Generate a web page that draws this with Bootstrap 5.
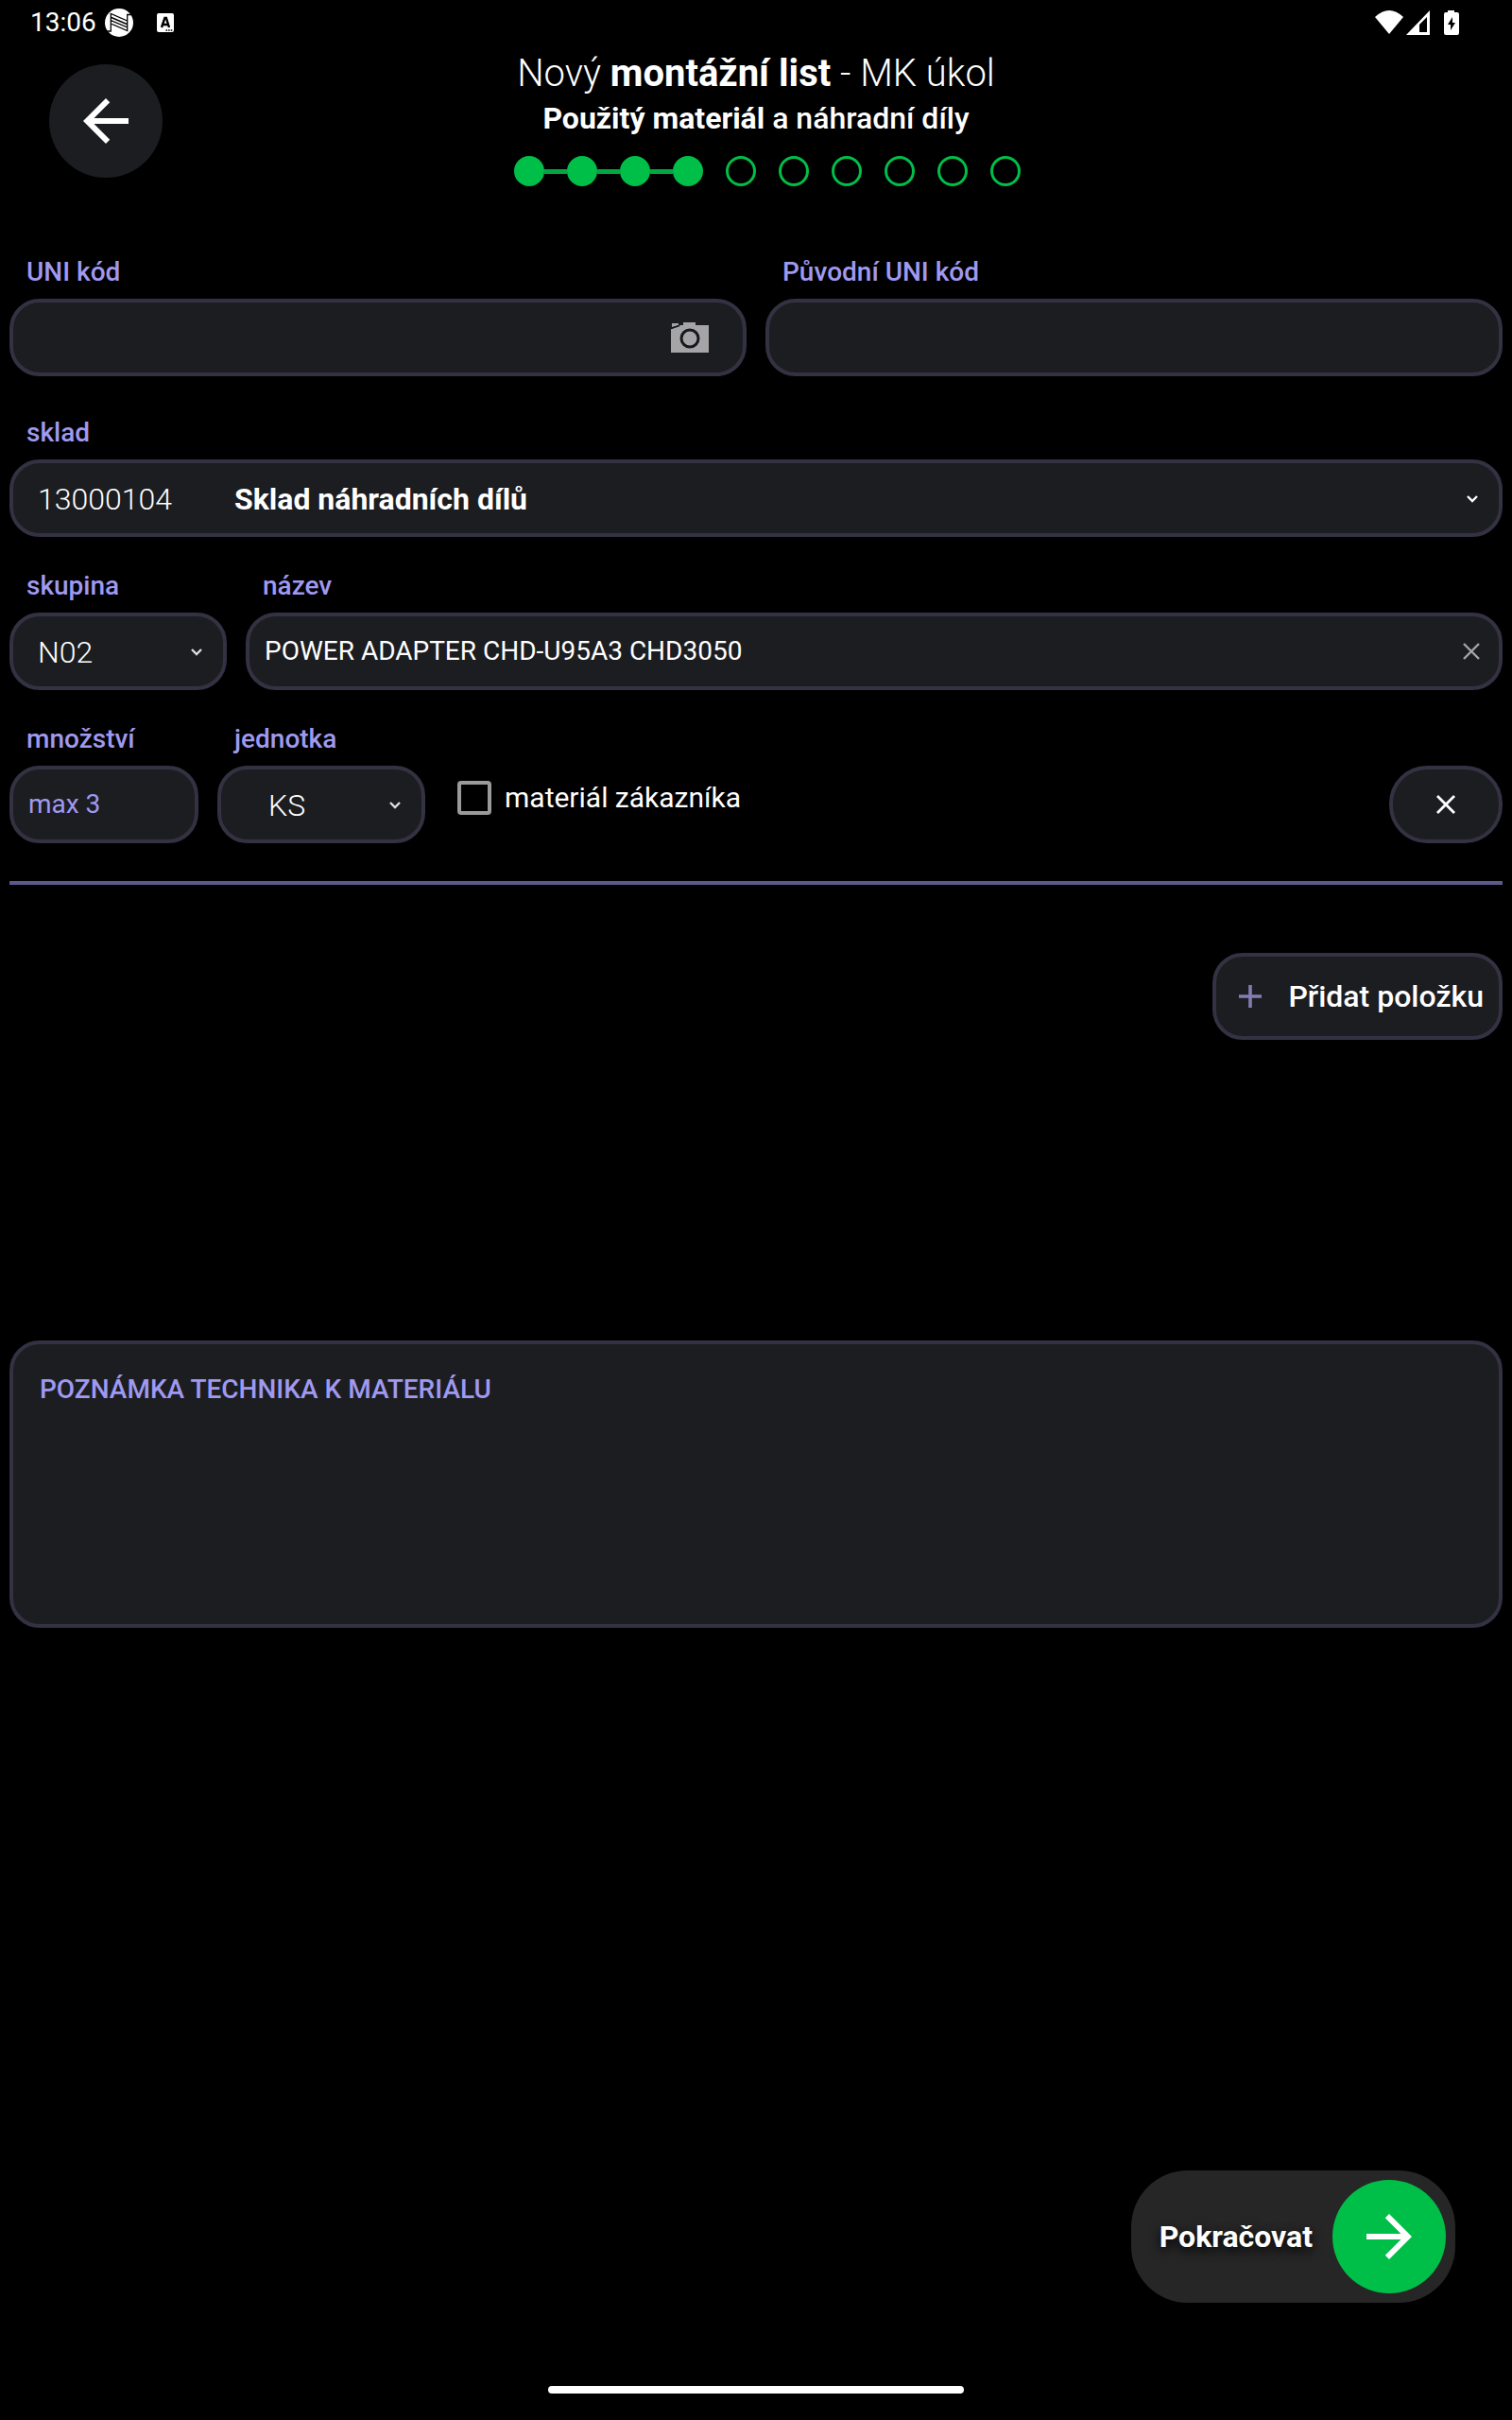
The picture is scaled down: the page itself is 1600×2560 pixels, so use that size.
<!DOCTYPE html>
<html lang="cs">
<head>
<meta charset="utf-8">
<meta name="viewport" content="width=device-width, initial-scale=1">
<title>Nový montážní list</title>
<link href="https://cdn.jsdelivr.net/npm/bootstrap@5.3.0/dist/css/bootstrap.min.css" rel="stylesheet">
<style>
:root { --surface: #1c1d21; --line: #343142; --violet: #9f99f0; --green: #00bf48; }
body { background: #000; color: #fff; font-family: Roboto, "Noto Sans", sans-serif; font-size: 32px; line-height: 40px; }
.status-bar { height: 48px; padding: 0 56px 0 32px; font-size: 28px; }
.status-left { gap: 24px; }
.status-right { gap: 3px; }
.battery { margin-left: 12px; }
.app-header { display: grid; grid-template-columns: 120px 1fr 120px; padding: 0 52px; }
.round-btn { width: 120px; height: 120px; background: var(--surface); margin-top: 20px; }
.title-line { font-size: 40px; line-height: 48px; font-weight: 300; padding-top: 6px; }
.sub-line { font-size: 32px; line-height: 40px; font-weight: 500; padding-top: 3px; }
.title-line b, .sub-line b { font-weight: 700; }
.steps { padding-top: 20px; }
.step-dot { width: 32px; height: 32px; border: 3px solid var(--green); border-radius: 50%; }
.step-link { width: 24px; height: 5px; }
.done .step-dot { background: var(--green); }
.done + .done .step-link { background: #00a83f; }
.form-area { padding: 75px 10px 0; }
.field-label { display: block; color: var(--violet); font-size: 28px; line-height: 32px; font-weight: 500; padding-left: 18px; margin-bottom: 12px; }
.field-row { margin-bottom: 36px; }
.field-box { height: 82px; background: var(--surface); border: 4px solid var(--line); border-radius: 32px; color: #fff; font-size: 32px; }
.field-box input, .field-box select { background: transparent; border: 0; outline: 0; color: #fff; min-width: 0; padding: 0; appearance: none; }
.field-box input { font-size: 28px; }
.field-box select { font-size: 32px; font-weight: 300; }
.field-box input::placeholder { color: var(--violet); opacity: 1; }
.w-group { width: 230px; }
.w-qty { width: 200px; }
.w-unit { width: 220px; }
.pad-select { padding: 2px 22px 0 26px; }
.pad-text { padding: 0 20px 0 16px; }
.code-col { width: 208px; font-weight: 300; }
.own-row { gap: 14px; padding-left: 34px; margin-bottom: 28px; }
.own-check { appearance: none; width: 36px; height: 36px; border: 4px solid #9a9a9a; border-radius: 4px; margin: 0; }
.own-check:checked { background: var(--green); }
.own-text { font-size: 30px; }
.del-btn { width: 120px; border-radius: 40px; }
.divider { height: 4px; background: #5d598e; margin-top: 40px; }
.add-btn { height: 92px; border: 4px solid var(--line); background: var(--surface); border-radius: 32px; padding: 0 16px 0 24px; font-size: 32px; font-weight: 500; gap: 28px; margin-top: 72px; }
.note-area { height: 304px; background: var(--surface); border: 4px solid var(--line); border-radius: 32px; color: #fff; font-size: 28px; line-height: 32px; font-weight: 500; padding: 32px 28px; resize: none; margin-top: 318px; }
.note-area::placeholder { color: var(--violet); opacity: 1; }
.next-btn { height: 140px; background: #262626; border-radius: 60px; padding: 0 10px 0 30px; gap: 21px; font-size: 32px; font-weight: 700; text-shadow: 0 4px 12px #000; }
.next-disc { width: 120px; height: 120px; background: var(--green); }
.next-row { padding: 0 60px 88px; }
.home-bar { width: 440px; height: 8px; margin-bottom: 28px; }
svg { display: block; flex: none; }
</style>
<script src="https://cdn.jsdelivr.net/npm/bootstrap@5.3.0/dist/js/bootstrap.bundle.min.js"></script>
</head>
<body class="d-flex flex-column min-vh-100">
<div class="status-bar d-flex align-items-center justify-content-between">
  <div class="status-left d-flex align-items-center">
    <div class="d-flex align-items-center gap-2">
      <span>13:06</span>
      <svg width="32" height="30" viewBox="2 0 32 30"><circle cx="18" cy="15" r="15" fill="#fff"/><path d="M5 24h4.300V16l17.400 7.500V20L9.300 12.500V9.500L26.700 17M31 6.500h-4.300V13L9.300 5.500V9M26.700 13v7M9.300 9 26.700 16.500M9.300 12v4" fill="none" stroke="#000" stroke-width="1.300"/></svg>
    </div>
    <svg width="18" height="20" viewBox="0 0 18 20"><rect width="18" height="20" rx="2" fill="#fff"/><path d="M5 15 8.400 5h1.500L13 15M6.200 12h5.600" fill="none" stroke="#000" stroke-width="2.400"/><path d="M9.500 18h7" stroke="#000" stroke-width="1.600" stroke-dasharray="1.600 1"/></svg>
  </div>
  <div class="status-right d-flex align-items-center">
    <svg width="30" height="26" viewBox="0 0 30 26"><path d="M0 7Q15-7 30 7L15 25z" fill="#fff"/></svg>
    <svg width="25" height="26" viewBox="0 0 25 26"><path fill-rule="evenodd" d="M25 0v26H0zM22 7l-8 8v8h8z" fill="#fff"/></svg>
    <svg class="battery" width="16" height="26" viewBox="0 0 16 26"><path d="M4 0h7v2h3q2 0 2 2v20q0 2-2 2H2q-2 0-2-2V4q0-2 2-2h2z" fill="#fff"/><path d="M9 7 4 15h3v6l5-8H9z" fill="#000"/></svg>
  </div>
</div>
<header class="app-header">
  <button type="button" aria-label="Zpět" class="round-btn btn rounded-circle p-0 border-0 d-flex align-items-center justify-content-center">
    <svg width="72" height="72" viewBox="0 0 24 24"><path d="M20 11H7.830l5.590-5.590L12 4l-8 8 8 8 1.410-1.410L7.830 13H20z" fill="#fff"/></svg>
  </button>
  <div class="text-center">
    <h1 class="title-line m-0">Nový <b>montážní list</b> - MK úkol</h1>
    <p class="sub-line m-0"><b>Použitý materiál</b> a náhradní díly</p>
    <div class="steps d-flex justify-content-center">
      <div class="d-flex align-items-center done"><div class="step-link"></div><div class="step-dot"></div></div>
      <div class="d-flex align-items-center done"><div class="step-link"></div><div class="step-dot"></div></div>
      <div class="d-flex align-items-center done"><div class="step-link"></div><div class="step-dot"></div></div>
      <div class="d-flex align-items-center done"><div class="step-link"></div><div class="step-dot"></div></div>
      <div class="d-flex align-items-center"><div class="step-link"></div><div class="step-dot"></div></div>
      <div class="d-flex align-items-center"><div class="step-link"></div><div class="step-dot"></div></div>
      <div class="d-flex align-items-center"><div class="step-link"></div><div class="step-dot"></div></div>
      <div class="d-flex align-items-center"><div class="step-link"></div><div class="step-dot"></div></div>
      <div class="d-flex align-items-center"><div class="step-link"></div><div class="step-dot"></div></div>
      <div class="d-flex align-items-center"><div class="step-link"></div><div class="step-dot"></div></div>
    </div>
  </div>
</header>
<main class="form-area d-flex flex-column">
  <div class="field-row d-flex pb-2">
    <div class="col pe-1 me-3">
      <label class="field-label" for="uni">UNI kód</label>
      <div class="field-box pad-text d-flex align-items-center">
        <input id="uni" type="text" class="flex-grow-1">
        <button type="button" aria-label="Vyfotit" class="btn p-0 border-0 me-3">
          <svg width="40" height="32" viewBox="0 0 40 32"><path d="M1 1h7v2L1 5zM0 7l10-4h3V0h13v3h14v29H0z" fill="#a5a5a7"/><path d="M0 6.500 9 3.500" stroke="#17181b" stroke-width="1.500"/><circle cx="20" cy="17" r="9" fill="none" stroke="#17181b" stroke-width="3"/></svg>
        </button>
      </div>
    </div>
    <div class="col">
      <label class="field-label" for="olduni">Původní UNI kód</label>
      <div class="field-box pad-text d-flex align-items-center"><input id="olduni" type="text" class="flex-grow-1"></div>
    </div>
  </div>
  <div class="field-row">
    <label class="field-label" for="store">sklad</label>
    <button type="button" id="store" class="field-box btn w-100 pad-select d-flex align-items-center text-start" aria-haspopup="listbox">
      <span class="code-col">13000104</span><b class="flex-grow-1">Sklad náhradních dílů</b>
      <svg width="12" height="8" viewBox="0 0 12 8"><path d="m1 1 5 5 5-5" fill="none" stroke="#fff" stroke-width="2.400"/></svg>
    </button>
  </div>
  <div class="field-row d-flex">
    <div class="w-group me-3">
      <label class="field-label" for="grp">skupina</label>
      <div class="field-box pad-select d-flex align-items-center">
        <select id="grp" class="flex-grow-1"><option>N02</option></select>
        <svg width="12" height="8" viewBox="0 0 12 8"><path d="m1 1 5 5 5-5" fill="none" stroke="#ddd" stroke-width="2.400"/></svg>
      </div>
    </div>
    <div class="flex-grow-1 ms-1">
      <label class="field-label" for="nm">název</label>
      <div class="field-box pad-text d-flex align-items-center">
        <input id="nm" type="text" class="flex-grow-1" value="POWER ADAPTER CHD-U95A3 CHD3050">
        <button type="button" aria-label="Smazat" class="btn p-0 border-0"><svg width="18" height="18" viewBox="0 0 18 18"><path d="m1 1 16 16M17 1 1 17" stroke="#a5a5a7" stroke-width="2.400"/></svg></button>
      </div>
    </div>
  </div>
  <div class="d-flex align-items-end">
    <div class="w-qty me-3">
      <label class="field-label" for="qty">množství</label>
      <div class="field-box pad-text d-flex align-items-center"><input id="qty" type="text" class="w-100" placeholder="max 3"></div>
    </div>
    <div class="w-unit ms-1">
      <label class="field-label" for="unit">jednotka</label>
      <div class="field-box pad-select d-flex align-items-center">
        <select id="unit" class="flex-grow-1 ps-4"><option>KS</option></select>
        <svg width="12" height="8" viewBox="0 0 12 8"><path d="m1 1 5 5 5-5" fill="none" stroke="#ddd" stroke-width="2.400"/></svg>
      </div>
    </div>
    <div class="own-row d-flex align-items-center">
      <input class="own-check" type="checkbox" id="own">
      <label class="own-text" for="own">materiál zákazníka</label>
    </div>
    <button type="button" aria-label="Odebrat položku" class="field-box del-btn btn p-0 ms-auto d-flex align-items-center justify-content-center"><svg width="20" height="20" viewBox="0 0 20 20"><path d="m1 1 18 18M19 1 1 19" stroke="#fff" stroke-width="2.800"/></svg></button>
  </div>
  <div class="divider"></div>
  <button type="button" class="add-btn btn text-white d-flex align-items-center align-self-end">
    <svg width="24" height="24" viewBox="0 0 24 24"><path d="M12 0v24M0 12h24" stroke="#827eb2" stroke-width="3.600"/></svg>
    <span>Přidat položku</span>
  </button>
  <textarea class="note-area w-100" aria-label="Poznámka technika k materiálu" placeholder="POZNÁMKA TECHNIKA K MATERIÁLU"></textarea>
</main>
<footer class="mt-auto">
  <div class="next-row d-flex justify-content-end">
    <button type="button" class="next-btn btn text-white border-0 d-flex align-items-center">
      <span>Pokračovat</span>
      <span class="next-disc rounded-circle d-flex align-items-center justify-content-center"><svg width="72" height="72" viewBox="0 0 24 24"><path d="m12 4-1.410 1.410L16.170 11H4v2h12.170l-5.580 5.590L12 20l8-8z" fill="#fff"/></svg></span>
    </button>
  </div>
  <div class="home-bar bg-white rounded-pill mx-auto"></div>
</footer>
</body>
</html>
